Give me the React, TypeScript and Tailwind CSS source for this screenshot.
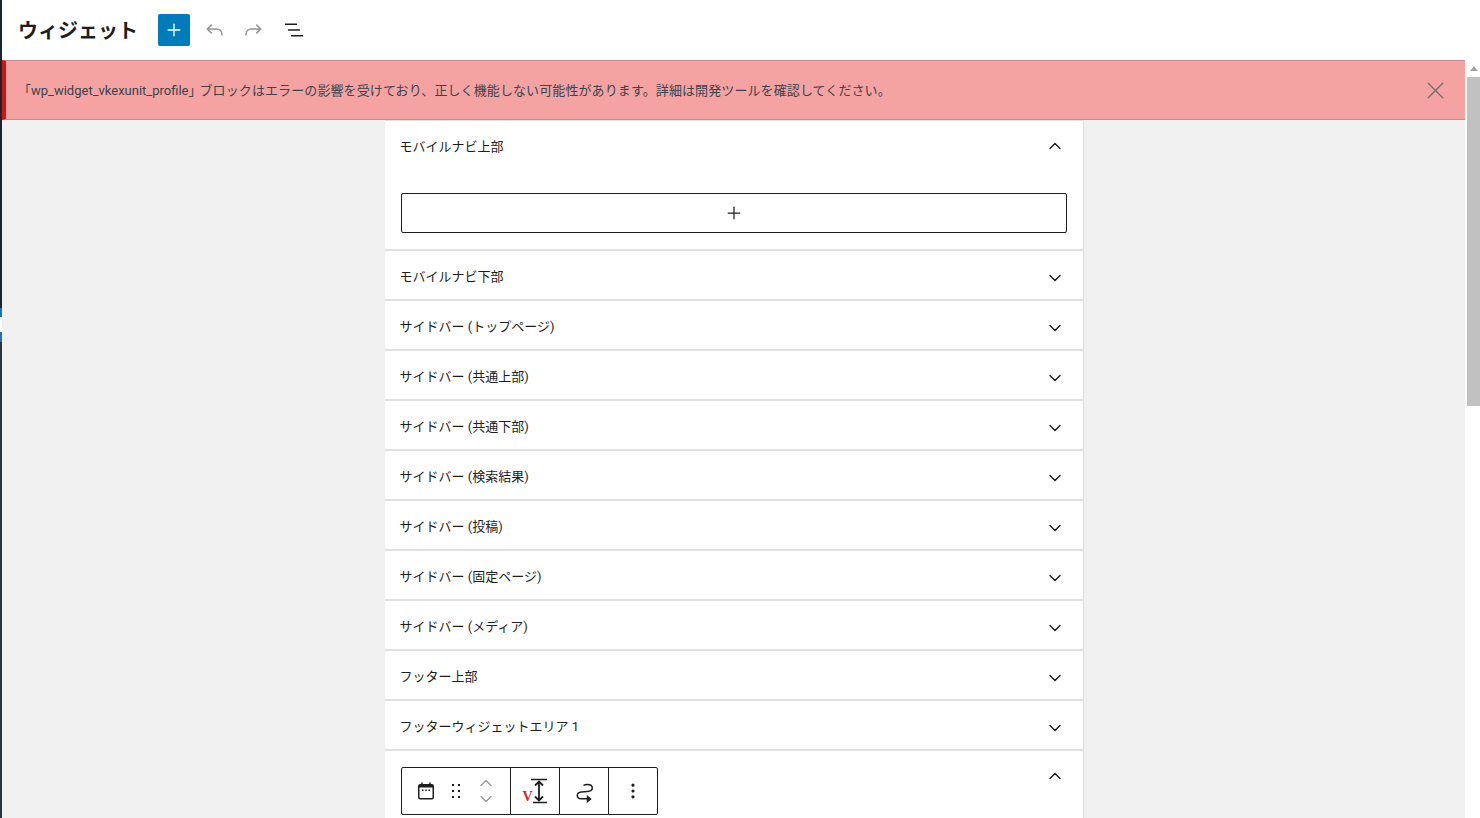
import React from 'react';
import { ChevronDown, ChevronUp, MoreVertical, Plus, X } from 'lucide-react';

const closedAreas = [
  'モバイルナビ下部',
  'サイドバー (トップページ)',
  'サイドバー (共通上部)',
  'サイドバー (共通下部)',
  'サイドバー (検索結果)',
  'サイドバー (投稿)',
  'サイドバー (固定ページ)',
  'サイドバー (メディア)',
  'フッター上部',
  'フッターウィジェットエリア 1',
];

const fontStack = 'font-["Roboto","Noto_Sans_CJK_JP",sans-serif]';

const ListViewIcon = () => (
  <svg width="24" height="24" viewBox="0 0 24 24" fill="currentColor">
    <path d="M3 5.5h12V7H3zM6 11.25h12v1.5H6zM9 17h12v1.5H9z" />
  </svg>
);

const UndoIcon = () => (
  <svg width="24" height="24" viewBox="0 0 24 24" fill="none" stroke="currentColor" strokeWidth="1.5">
    <path d="M20 17.500v-1.200c0-3.200-2.400-5.300-5.500-5.300H5.500" />
    <path d="M9.700 6.600 5.300 11l4.400 4.400" />
  </svg>
);

const RedoIcon = () => (
  <svg width="24" height="24" viewBox="0 0 24 24" fill="none" stroke="currentColor" strokeWidth="1.5">
    <path d="M4 17.500v-1.200C4 13.100 6.400 11 9.500 11h9" />
    <path d="M14.300 6.600 18.700 11l-4.400 4.400" />
  </svg>
);

const CalendarIcon = () => (
  <svg width="20" height="20" viewBox="0 0 20 20" fill="none">
    <rect x="2.750" y="3.750" width="14.500" height="14" rx="1.500" stroke="currentColor" strokeWidth="1.500" />
    <path d="M3 4h14v2.500H3z" fill="currentColor" />
    <path d="M6 1.500v3M14 1.500v3" stroke="currentColor" strokeWidth="1.500" />
    <path d="M6 8.500h1.500V10H6zM9.250 8.500h1.500V10h-1.500zM12.500 8.500H14V10h-1.500z" fill="currentColor" />
  </svg>
);

const DragIcon = () => (
  <svg width="18" height="18" viewBox="0 0 18 18" fill="currentColor">
    <path d="M5 2h2v2H5zM11 2h2v2h-2zM5 8h2v2H5zM11 8h2v2h-2zM5 14h2v2H5zM11 14h2v2h-2z" />
  </svg>
);

const HeightIcon = () => (
  <svg width="18" height="26" viewBox="0 0 18 26" fill="none" stroke="currentColor" strokeWidth="1.500">
    <path d="M1 1.500h16M3 24.500h14" />
    <path d="M9 4v18M5 7.500l4-4 4 4M5 18.500l4 4 4-4" strokeWidth="1.800" />
  </svg>
);

const TransformIcon = () => (
  <svg width="24" height="24" viewBox="0 0 24 24" fill="none" stroke="currentColor" strokeWidth="1.500">
    <path d="M11.500 6.500c1-.8 2.500-1 3.800-1 3 0 5 1.500 5 3.600 0 2.400-2.300 3.300-5 3.400l-6 .5c-2.500.2-4 1.600-4 3.400 0 2 1.700 3.300 4 3.300h7.700" />
    <path d="M15.500 17.500 18.500 20l-3 2.500z" fill="currentColor" />
  </svg>
);

function AreaRow({ title }: { title: string }) {
  return (
    <div className="flex h-[50px] w-[699px] items-center justify-between border-r border-b-2 border-[#e0e0e0] bg-white pt-[3px] pl-[15px] pr-[18px]">
      <span className="text-[13px] text-[#1e1e1e]">{title}</span>
      <ChevronDown size={20} strokeWidth={1.7} className="mt-[3px] text-[#1e1e1e]" />
    </div>
  );
}

export default function App() {
  return (
    <div className={`flex h-[818px] w-[1480px] overflow-hidden bg-white ${fontStack}`}>
      {/* admin menu edge */}
      <div className="flex w-[2px] shrink-0 flex-col bg-[#1d2327]">
        <div className="h-[308px]" />
        <div className="h-[9px] bg-[#2271b1]" />
        <div className="h-[15px] bg-white" />
        <div className="h-[10px] bg-[#2271b1]" />
        <div className="flex-1 bg-[#2c3338]" />
      </div>

      <div className="flex min-w-0 flex-1 flex-col">
        {/* Header */}
        <header className="flex h-[60px] shrink-0 items-center bg-white pl-[16px]">
          <h1 className="w-[140px] pt-[1px] text-[20px] font-semibold text-[#1e1e1e]">ウィジェット</h1>
          <button className="flex h-[32px] w-[32px] items-center justify-center rounded-[2px] bg-[#007cba] text-white">
            <Plus size={20} strokeWidth={1.6} />
          </button>
          <div className="ml-[12px] text-[#949494]"><UndoIcon /></div>
          <div className="ml-[16px] text-[#949494]"><RedoIcon /></div>
          <div className="ml-[16px] text-[#1e1e1e]"><ListViewIcon /></div>
        </header>

        <div className="flex min-h-0 flex-1">
          <div className="flex min-w-0 flex-1 flex-col">
            {/* Notice */}
            <div className="flex h-[60px] shrink-0 items-center justify-between border-y border-y-[#cc8a8c] border-l-4 border-l-[#cc1818] bg-[#f4a2a2] pl-[12px] pr-[15px]">
              <p className="pt-[2px] text-[13px] text-[#3c434a]">「wp_widget_vkexunit_profile」<span className="-ml-[2px] tracking-[0.1px]">ブロックはエラーの影響を受けており、正しく機能しない可能性があります。詳細は開発ツールを確認してください。</span></p>
              <X size={29} strokeWidth={1.1} className="text-[#6f6f6f]" />
            </div>

            {/* Widget areas */}
            <div className="flex min-h-0 flex-1 flex-col items-center overflow-hidden bg-[#f0f0f0] pl-[1px]">
              <div className="flex h-[131px] w-[699px] shrink-0 flex-col border-t border-r border-b-2 border-[#e0e0e0] bg-white pl-[15px]">
                <div className="flex h-[51px] items-center justify-between pr-[18px]">
                  <span className="text-[13px] text-[#1e1e1e]">モバイルナビ上部</span>
                  <ChevronUp size={20} strokeWidth={1.7} className="-mt-[1px] text-[#1e1e1e]" />
                </div>
                <button className="mt-[21px] ml-[1px] flex h-[40px] w-[666px] items-center justify-center rounded-[2px] border border-[#1e1e1e] text-[#1e1e1e]">
                  <Plus size={20} strokeWidth={1.5} />
                </button>
              </div>

              {closedAreas.map((title) => (
                <AreaRow key={title} title={title} />
              ))}

              <div className="relative w-[699px] flex-1 border-r border-[#e0e0e0] bg-white px-[16px] pt-[16px]">
                <ChevronUp size={20} strokeWidth={1.7} className="absolute right-[18px] top-[15px] text-[#1e1e1e]" />
                {/* Block toolbar */}
                <div className="flex h-[48px] w-[257px] rounded-[2px] border border-[#1e1e1e] text-[#1e1e1e]">
                  <div className="flex w-[109px] items-center border-r border-[#1e1e1e] pl-[14px]">
                    <CalendarIcon />
                    <div className="ml-[11px]"><DragIcon /></div>
                    <div className="ml-[11px] flex flex-col text-[#949494]">
                      <ChevronUp size={20} strokeWidth={1.4} className="-mb-[4px]" />
                      <ChevronDown size={20} strokeWidth={1.4} />
                    </div>
                  </div>
                  <div className="relative flex w-[49px] items-center justify-end border-r border-[#1e1e1e] pr-[11px]">
                    <HeightIcon />
                    <span className='absolute bottom-[10px] left-[12px] font-["Liberation_Serif",serif] text-[14px] leading-none font-bold text-[#e0202a]'>V</span>
                  </div>
                  <div className="flex w-[49px] items-center justify-center border-r border-[#1e1e1e]">
                    <TransformIcon />
                  </div>
                  <div className="flex flex-1 items-center justify-center">
                    <MoreVertical size={20} strokeWidth={1.8} />
                  </div>
                </div>
              </div>
            </div>
          </div>

          {/* Scrollbar */}
          <div className="flex w-[15px] shrink-0 flex-col items-end bg-white">
            <div className="flex h-[17px] w-full items-center justify-center pl-[2px]">
              <div className="h-0 w-0 border-x-[4px] border-b-[5px] border-x-transparent border-b-[#a3a3a3]" />
            </div>
            <div className="h-[329px] w-[13px] bg-[#c1c1c1]" />
          </div>
        </div>
      </div>
    </div>
  );
}
